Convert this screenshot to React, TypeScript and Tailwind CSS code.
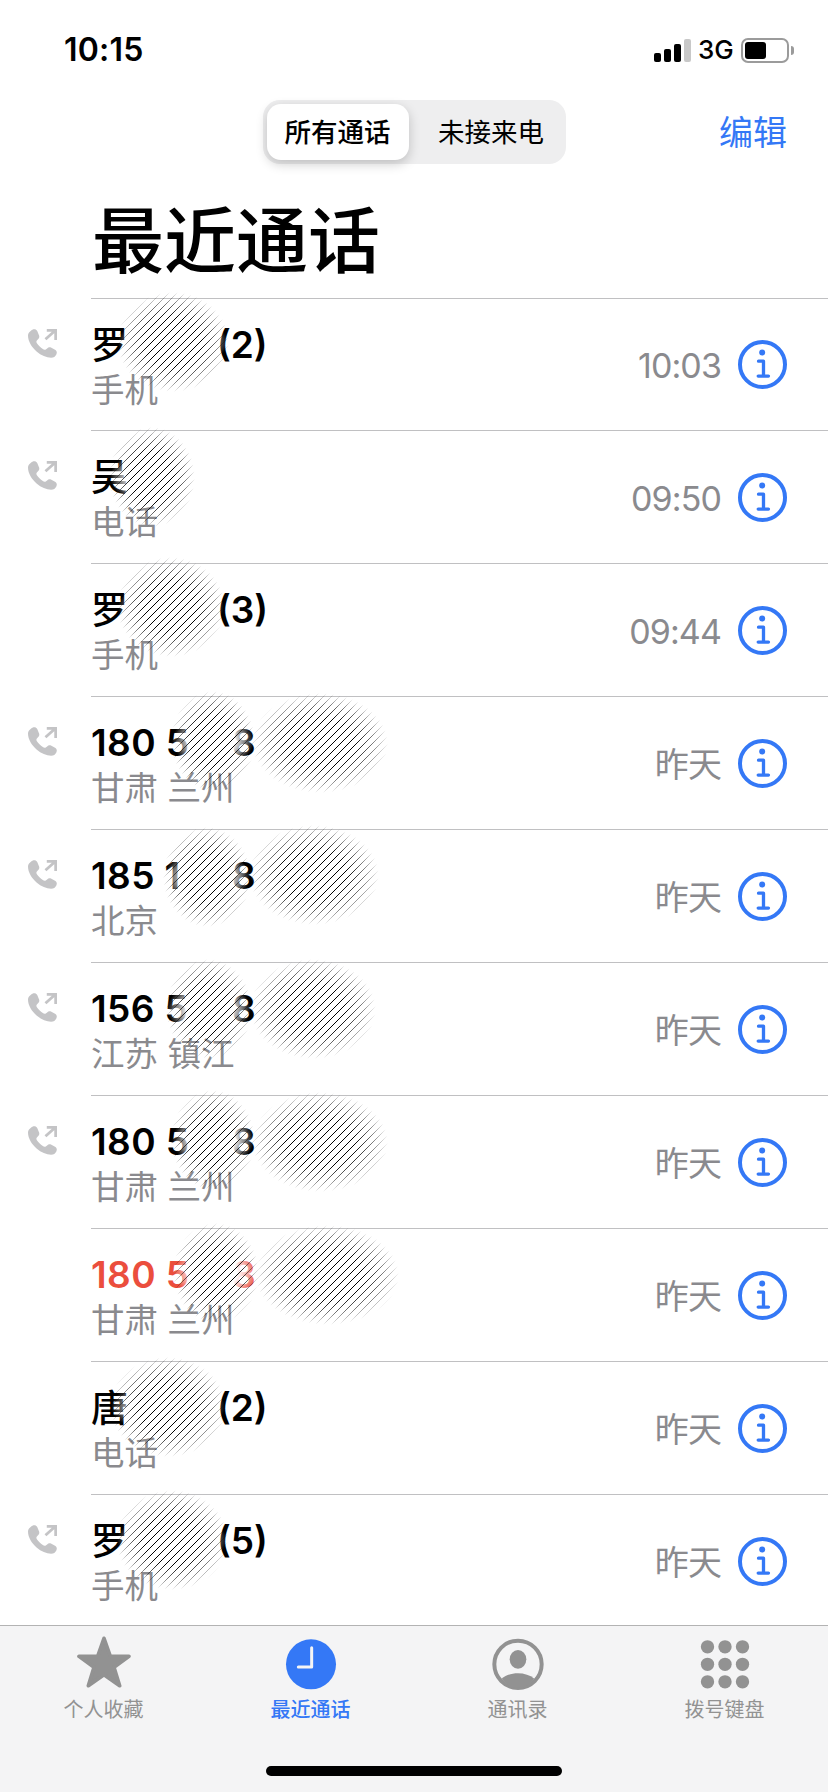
// App.tsx
import { useId } from "react";

type Scribble = { cx: number; cy: number; rx: number };

type Call = {
  name: string;
  suffix?: string;
  from: string;
  time: string;
  outgoing?: boolean;
  missed?: boolean;
  phone?: boolean; // plain number, no contact
  scribbles: Scribble[];
};

// scribble positions are relative to the left edge of the name column
const calls: Call[] = [
  { name: "罗", suffix: "(2)", from: "手机", time: "10:03", outgoing: true, scribbles: [{ cx: 82, cy: 43, rx: 56 }] },
  { name: "吴", from: "电话", time: "09:50", outgoing: true, scribbles: [{ cx: 61, cy: 46, rx: 43 }] },
  { name: "罗", suffix: "(3)", from: "手机", time: "09:44", scribbles: [{ cx: 80, cy: 43, rx: 54 }] },
  {
    name: "180 5", suffix: "8", from: "甘肃 兰州", time: "昨天", outgoing: true, phone: true,
    scribbles: [{ cx: 122, cy: 44, rx: 42 }, { cx: 229, cy: 46, rx: 68 }],
  },
  {
    name: "185 1", suffix: "8", from: "北京", time: "昨天", outgoing: true, phone: true,
    scribbles: [{ cx: 116, cy: 47, rx: 44 }, { cx: 223, cy: 45, rx: 65 }],
  },
  {
    name: "156 5", suffix: "8", from: "江苏 镇江", time: "昨天", outgoing: true, phone: true,
    scribbles: [{ cx: 118, cy: 46, rx: 43 }, { cx: 222, cy: 46, rx: 63 }],
  },
  {
    name: "180 5", suffix: "8", from: "甘肃 兰州", time: "昨天", outgoing: true, phone: true,
    scribbles: [{ cx: 122, cy: 44, rx: 42 }, { cx: 229, cy: 46, rx: 68 }],
  },
  {
    name: "180 5", suffix: "8", from: "甘肃 兰州", time: "昨天", missed: true, phone: true,
    scribbles: [{ cx: 125, cy: 44, rx: 43 }, { cx: 236, cy: 46, rx: 72 }],
  },
  { name: "唐", suffix: "(2)", from: "电话", time: "昨天", scribbles: [{ cx: 77, cy: 45, rx: 58 }] },
  { name: "罗", suffix: "(5)", from: "手机", time: "昨天", outgoing: true, scribbles: [{ cx: 81, cy: 45, rx: 56 }] },
];

function OutgoingIcon() {
  return (
    <svg viewBox="0 0 88 88" className="h-[29px] w-[29px] text-[#c4c4c6]" aria-hidden>
      <path
        fill="currentColor"
        d="M8 6C3 10 0 14 0 20C0 38 12 56 26 68C40 80 56 87 70 87C78 87 83 83 86 77C89 71 87 66 82 63L71 57C66 55 62 55 58 59L54 62C51 64 48 63 45 61C38 56 31 49 27 43C25 40 25 37 27 35L31 30C35 27 35 22 33 18L28 6C24-1 14 0 8 6Z"
      />
      <path d="M53 31L81 6M57 4H84V33" fill="none" stroke="currentColor" strokeWidth="8.5" />
    </svg>
  );
}

function InfoIcon() {
  return (
    <svg viewBox="0 0 148 148" className="h-[49px] w-[49px] shrink-0 text-[#3478f6]" aria-hidden>
      <circle cx="74" cy="74" r="68" fill="none" stroke="currentColor" strokeWidth="12" />
      <circle cx="73" cy="38" r="9" fill="currentColor" />
      <path
        d="M62 64H77V109M61 109H92"
        fill="none"
        stroke="currentColor"
        strokeWidth="10"
        strokeLinecap="round"
        strokeLinejoin="round"
      />
    </svg>
  );
}

function Scribbles({ items }: { items: Scribble[] }) {
  const id = useId();
  return (
    <svg className="pointer-events-none absolute left-0 top-0 h-[133px] w-[340px] overflow-visible" aria-hidden>
      <defs>
        <pattern id={`${id}h`} width="8" height="8" patternUnits="userSpaceOnUse">
          <path
            d="M0 7h1v1h-1zM1 6h1v1h-1zM2 5h1v1h-1zM3 4h1v1h-1zM4 3h1v1h-1zM5 2h1v1h-1zM6 1h1v1h-1zM7 0h1v1h-1z"
            fill="#000"
            shapeRendering="crispEdges"
          />
        </pattern>
        <radialGradient id={`${id}f`}>
          <stop offset="0.5" stopColor="#fff" />
          <stop offset="0.78" stopColor="#fff" stopOpacity="0.5" />
          <stop offset="1" stopColor="#fff" stopOpacity="0" />
        </radialGradient>
        <mask id={`${id}m`} maskUnits="userSpaceOnUse" x="-20" y="-20" width="380" height="180">
          {items.map((s, i) => (
            <ellipse key={i} cx={s.cx} cy={s.cy} rx={s.rx} ry="50" fill={`url(#${id}f)`} />
          ))}
        </mask>
      </defs>
      {items.map((s, i) => (
        <ellipse key={i} cx={s.cx} cy={s.cy} rx={s.rx - 1} ry="27" fill={`url(#${id}f)`} />
      ))}
      <rect x="-20" y="-20" width="380" height="180" fill={`url(#${id}h)`} mask={`url(#${id}m)`} />
    </svg>
  );
}

function CallRow({ call }: { call: Call }) {
  return (
    <li className="flex h-[133px] first:h-[132px]">
      <div className="w-[91px] shrink-0 pl-7 pt-[31px]">{call.outgoing && <OutgoingIcon />}</div>
      <div className="relative flex flex-1 border-t border-[#c0c0c2]">
        <div className="flex-1 pt-5">
          <div
            className={`flex h-[50px] items-center text-[37px] font-semibold leading-none ${
              call.missed ? "text-[#eb4e3d]" : "text-black"
            }`}
          >
            <span
              className={`whitespace-nowrap ${call.phone ? "w-[141px] tracking-[0.4px]" : "w-[126px] pt-[2px] font-medium"}`}
            >
              {call.name}
            </span>
            <span>{call.suffix}</span>
          </div>
          <div className="flex h-[43px] items-center whitespace-pre text-[33.5px] leading-none text-[#8a8a8e]">
            {call.from}
          </div>
        </div>
        <div className="flex h-full items-center gap-[17px] pr-[41px]">
          <span className="pt-[3px] text-[34px] leading-none tracking-[-0.9px] text-[#8a8a8e]">{call.time}</span>
          <InfoIcon />
        </div>
        <Scribbles items={call.scribbles} />
      </div>
    </li>
  );
}

function StatusBar() {
  return (
    <div className="flex h-[100px] items-center justify-between pl-16 pr-[34px]">
      <span className="text-[32px] font-semibold leading-none tracking-[0.2px]">10:15</span>
      <div className="flex items-center">
        <div className="flex h-[23px] items-end gap-[3px]">
          <div className="h-[9px] w-[7px] rounded-[2px] bg-black" />
          <div className="h-[13px] w-[7px] rounded-[2px] bg-black" />
          <div className="h-[18px] w-[7px] rounded-[2px] bg-black" />
          <div className="h-[23px] w-[7px] rounded-[2px] bg-[#c8c8c8]" />
        </div>
        <span className="ml-[7px] w-[36px] text-[26px] font-medium leading-none">3G</span>
        <div className="ml-[7px] h-[25px] w-[48px] rounded-[7px] border-2 border-[#9b9b9b] p-[2px]">
          <div className="h-full w-[21px] rounded-[3px] bg-black" />
        </div>
        <div className="ml-[2px] h-[9px] w-[3px] rounded-r-full bg-[#9b9b9b]" />
      </div>
    </div>
  );
}

function TabBar() {
  return (
    <nav className="flex h-[167px] flex-col border-t border-[#b3b3b3] bg-[#f4f4f5] text-[#929292]">
      <div className="grid h-[140px] grid-cols-4 text-[20px] font-normal">
        <div className="flex flex-col items-center pt-[9px]">
          <svg viewBox="0 0 162 162" className="h-[54px] w-[54px]" aria-hidden>
            <path
              d="M81 10L100 64H156L111 97L128 152L81 119L34 152L51 97L6 64H62Z"
              fill="currentColor"
              stroke="currentColor"
              strokeWidth="11"
              strokeLinejoin="round"
            />
          </svg>
          <span className="mt-[6px] leading-[30px]">个人收藏</span>
        </div>
        <div className="flex flex-col items-center pt-[9px] font-medium text-[#3478f6]">
          <svg viewBox="0 0 162 162" className="h-[54px] w-[54px] overflow-visible" aria-hidden>
            <circle cx="81" cy="88" r="75" fill="currentColor" />
            <path d="M83 38V96H43" fill="none" stroke="#f4f4f5" strokeWidth="9" strokeLinecap="round" strokeLinejoin="round" />
          </svg>
          <span className="mt-[6px] leading-[30px]">最近通话</span>
        </div>
        <div className="flex flex-col items-center pt-[9px]">
          <svg viewBox="0 0 162 162" className="h-[54px] w-[54px] overflow-visible" aria-hidden>
            <circle cx="81" cy="88" r="71" fill="none" stroke="currentColor" strokeWidth="12" />
            <ellipse cx="81" cy="73" rx="25" ry="28" fill="currentColor" />
            <path d="M32 131C57 109 105 109 130 131C104 168 58 168 32 131Z" fill="currentColor" />
          </svg>
          <span className="mt-[6px] leading-[30px]">通讯录</span>
        </div>
        <div className="flex flex-col items-center pt-[9px]">
          <svg viewBox="0 0 162 162" className="h-[54px] w-[54px]" aria-hidden>
            {[35.5, 88, 140.5].map((y) =>
              [28.5, 81, 133.5].map((x) => <circle key={`${x}-${y}`} cx={x} cy={y} r="20" fill="currentColor" />)
            )}
          </svg>
          <span className="mt-[6px] leading-[30px]">拨号键盘</span>
        </div>
      </div>
      <div className="mx-auto h-[10px] w-[296px] rounded-full bg-black" />
    </nav>
  );
}

export default function App() {
  return (
    <div className="flex h-[1792px] w-[828px] flex-col overflow-hidden bg-white font-[Inter,'Noto_Sans_CJK_SC',sans-serif] text-black">
      <StatusBar />

      <header className="grid h-16 grid-cols-[1fr_303px_1fr] items-center">
        <div />
        <div className="flex h-16 rounded-[17px] bg-[#eeeeef] p-[4px] text-[26.5px] leading-none">
          <button className="h-14 w-[142px] rounded-[14px] bg-white font-medium shadow-[0_4px_12px_rgba(0,0,0,0.2)]">
            所有通话
          </button>
          <button className="h-14 flex-1 pl-3">未接来电</button>
        </div>
        <button className="justify-self-end pr-[41px] pt-[2px] text-[34px] leading-none text-[#3478f6]">编辑</button>
      </header>

      <h1 className="h-[134px] pl-[92px] pt-[41px] text-[72px] font-medium leading-[72px]">最近通话</h1>

      <ul className="h-[1327px] shrink-0">
        {calls.map((call, i) => (
          <CallRow key={i} call={call} />
        ))}
      </ul>

      <TabBar />
    </div>
  );
}
